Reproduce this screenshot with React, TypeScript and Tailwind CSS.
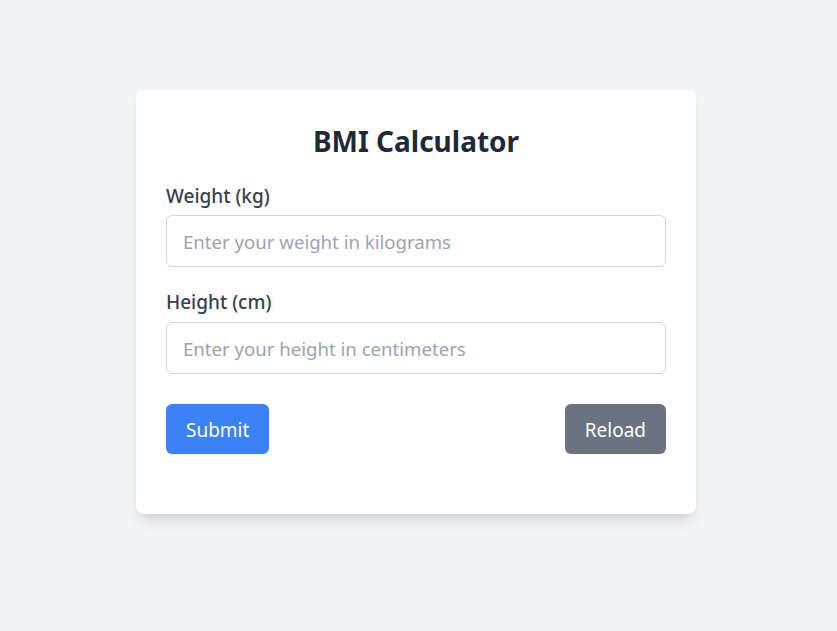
export default function App() {
  return (
    <div
      className="min-h-screen bg-[#f3f4f6] pt-[90px]"
      style={{ fontFamily: '"Noto Sans", "Open Sans", sans-serif' }}
    >
      <div className="flex justify-center pr-[5px]">
        <div className="w-[560px] rounded-lg bg-white px-[30px] pt-[33px] pb-[60px] shadow-[0_10px_15px_-3px_rgba(0,0,0,0.1),0_4px_6px_-4px_rgba(0,0,0,0.1)]">
          <h1 className="mb-[23px] text-center text-[28px] leading-9 font-bold text-[#1f2937]">BMI Calculator</h1>
          <label className="mb-[5px] block text-[19px] leading-7 font-medium text-[#374151]">Weight (kg)</label>
          <input
            className="block h-[52px] w-full rounded-md border border-[#d1d5db] px-4 text-[18.6px] text-[#374151] placeholder-[#9ca3af] outline-none"
            placeholder="Enter your weight in kilograms"
          />
          <label className="mt-[21px] mb-[6px] block text-[19px] leading-7 font-medium text-[#374151]">Height (cm)</label>
          <input
            className="block h-[52px] w-full rounded-md border border-[#d1d5db] px-4 text-[18.6px] text-[#374151] placeholder-[#9ca3af] outline-none"
            placeholder="Enter your height in centimeters"
          />
          <div className="mt-[30px] flex items-center justify-between">
            <button className="h-[50px] rounded-md bg-[#3b82f6] px-5 pt-[3px] text-[19px] text-white">Submit</button>
            <button className="h-[50px] rounded-md bg-[#6b7280] px-5 pt-[3px] text-[19px] text-white">Reload</button>
          </div>
        </div>
      </div>
    </div>
  );
}
